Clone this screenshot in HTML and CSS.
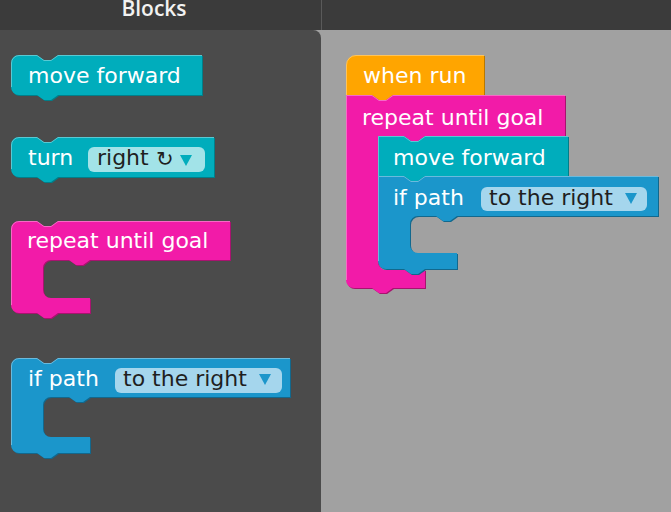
FILE: index.html
```html
<!DOCTYPE html>
<html>
<head>
<meta charset="utf-8">
<link rel="stylesheet" href="styles.css">
</head>
<body>
<div class="app">
  <header class="topbar">
    <div class="tb-left"><span class="tb-title">Blocks</span></div>
    <div class="tb-right"></div>
  </header>
  <main class="main">
    <section class="flyout">
      <svg class="canvas" width="321" height="482" viewBox="0 30 321 482">
        <!-- move forward -->
        <g class="blk teal">
          <path class="dk" transform="translate(1,1)" d="M11,63 A8,8 0 0 1 19,55 H37 L44,60 H51 L58,55 H202 V95 H58 L51,100 H44 L37,95 H19 A8,8 0 0 1 11,87 Z"/>
          <path class="bd" d="M11,63 A8,8 0 0 1 19,55 H37 L44,60 H51 L58,55 H202 V95 H58 L51,100 H44 L37,95 H19 A8,8 0 0 1 11,87 Z"/>
          <path class="hl" d="M11.5,87 V63 A7.5,7.5 0 0 1 19,55.5 H37 L44,60.5 H51 L58,55.5 H202"/>
          <text class="lbl" x="28" y="83">move forward</text>
        </g>
        <!-- turn -->
        <g class="blk teal">
          <path class="dk" transform="translate(1,1)" d="M11,145 A8,8 0 0 1 19,137 H37 L44,142 H51 L58,137 H214 V177 H58 L51,182 H44 L37,177 H19 A8,8 0 0 1 11,169 Z"/>
          <path class="bd" d="M11,145 A8,8 0 0 1 19,137 H37 L44,142 H51 L58,137 H214 V177 H58 L51,182 H44 L37,177 H19 A8,8 0 0 1 11,169 Z"/>
          <path class="hl" d="M11.5,169 V145 A7.5,7.5 0 0 1 19,137.5 H37 L44,142.5 H51 L58,137.5 H214"/>
          <text class="lbl" x="28" y="165">turn</text>
          <rect class="dd" x="88" y="147" width="117" height="25" rx="6"/>
          <text class="ddt" x="97" y="165">right</text>
          <text class="ddt sym" x="156" y="166">↻</text>
          <polygon class="arr" points="180,155 192,155 186,166"/>
        </g>
        <!-- repeat -->
        <g class="blk pink">
          <path class="dk" transform="translate(1,1)" d="M11,229 A8,8 0 0 1 19,221 H37 L44,226 H51 L58,221 H230 V260 H90 L83,265 H76 L69,260 H51 A8,8 0 0 0 43,268 V290 A8,8 0 0 0 51,298 H90 V313 H58 L51,318 H44 L37,313 H19 A8,8 0 0 1 11,305 Z"/>
          <path class="bd" d="M11,229 A8,8 0 0 1 19,221 H37 L44,226 H51 L58,221 H230 V260 H90 L83,265 H76 L69,260 H51 A8,8 0 0 0 43,268 V290 A8,8 0 0 0 51,298 H90 V313 H58 L51,318 H44 L37,313 H19 A8,8 0 0 1 11,305 Z"/>
          <path class="hl" d="M11.5,305 V229 A7.5,7.5 0 0 1 19,221.5 H37 L44,226.5 H51 L58,221.5 H230"/>
          <text class="lbl" x="27" y="248">repeat until goal</text>
        </g>
        <!-- if path -->
        <g class="blk blue">
          <path class="dk" transform="translate(1,1)" d="M11,366 A8,8 0 0 1 19,358 H37 L44,363 H51 L58,358 H290 V397 H90 L83,402 H76 L69,397 H51 A8,8 0 0 0 43,405 V429 A8,8 0 0 0 51,437 H90 V453 H58 L51,458 H44 L37,453 H19 A8,8 0 0 1 11,445 Z"/>
          <path class="bd" d="M11,366 A8,8 0 0 1 19,358 H37 L44,363 H51 L58,358 H290 V397 H90 L83,402 H76 L69,397 H51 A8,8 0 0 0 43,405 V429 A8,8 0 0 0 51,437 H90 V453 H58 L51,458 H44 L37,453 H19 A8,8 0 0 1 11,445 Z"/>
          <path class="hl" d="M11.5,445 V366 A7.5,7.5 0 0 1 19,358.5 H37 L44,363.5 H51 L58,358.5 H290"/>
          <text class="lbl" x="28" y="386">if path</text>
          <rect class="dd" x="115" y="368" width="167" height="25" rx="6"/>
          <text class="ddt" x="123" y="386">to the right</text>
          <polygon class="arr" points="259,374 271,374 265,385"/>
        </g>
      </svg>
    </section>
    <section class="workspace">
      <svg class="canvas" width="350" height="482" viewBox="321 30 350 482">
        <!-- when run -->
        <g class="blk orange">
          <path class="dk" transform="translate(1,1)" d="M346,65 A10,10 0 0 1 356,55 H484 V95 H393 L386,100 H379 L372,95 H346 Z"/>
          <path class="bd" d="M346,65 A10,10 0 0 1 356,55 H484 V95 H393 L386,100 H379 L372,95 H346 Z"/>
          <path class="hl" d="M346.5,95 V65 A9.5,9.5 0 0 1 356,55.5 H484"/>
          <text class="lbl" x="363" y="83">when run</text>
        </g>
        <!-- repeat -->
        <g class="blk pink">
          <path class="dk" transform="translate(1,1)" d="M346,95 H372 L379,100 H386 L393,95 H565 V136 H425 L418,141 H411 L404,136 H386 A8,8 0 0 0 378,144 V262 A8,8 0 0 0 386,270 H425 V288 H393 L386,293 H379 L372,288 H354 A8,8 0 0 1 346,280 Z"/>
          <path class="bd" d="M346,95 H372 L379,100 H386 L393,95 H565 V136 H425 L418,141 H411 L404,136 H386 A8,8 0 0 0 378,144 V262 A8,8 0 0 0 386,270 H425 V288 H393 L386,293 H379 L372,288 H354 A8,8 0 0 1 346,280 Z"/>
          <path class="hl" d="M346.5,280 V95.5 H372 L379,100.5 H386 L393,95.5 H565"/>
          <text class="lbl" x="362" y="125">repeat until goal</text>
        </g>
        <!-- move forward -->
        <g class="blk teal">
          <path class="dk" transform="translate(1,1)" d="M378,136 H404 L411,141 H418 L425,136 H568 V176 H425 L418,181 H411 L404,176 H378 Z"/>
          <path class="bd" d="M378,136 H404 L411,141 H418 L425,136 H568 V176 H425 L418,181 H411 L404,176 H378 Z"/>
          <path class="hl" d="M378.5,176 V136.5 H404 L411,141.5 H418 L425,136.5 H568"/>
          <text class="lbl" x="393" y="165">move forward</text>
        </g>
        <!-- if path -->
        <g class="blk blue">
          <path class="dk" transform="translate(1,1)" d="M378,176 H404 L411,181 H418 L425,176 H658 V216 H457 L450,221 H443 L436,216 H418 A8,8 0 0 0 410,224 V245 A8,8 0 0 0 418,253 H457 V269 H425 L418,274 H411 L404,269 H386 A8,8 0 0 1 378,261 Z"/>
          <path class="bd" d="M378,176 H404 L411,181 H418 L425,176 H658 V216 H457 L450,221 H443 L436,216 H418 A8,8 0 0 0 410,224 V245 A8,8 0 0 0 418,253 H457 V269 H425 L418,274 H411 L404,269 H386 A8,8 0 0 1 378,261 Z"/>
          <path class="hl" d="M378.5,261 V176.5 H404 L411,181.5 H418 L425,176.5 H658"/>
          <text class="lbl" x="393" y="205">if path</text>
          <rect class="dd" x="481" y="187" width="166" height="24" rx="6"/>
          <text class="ddt" x="489" y="205">to the right</text>
          <polygon class="arr" points="625,193 637,193 631,204"/>
        </g>
      </svg>
    </section>
  </main>
</div>
</body>
</html>
```
FILE: styles.css
```css
* { box-sizing: border-box; }
html, body { margin: 0; padding: 0; }
body { background: #a1a1a1; font-family: "Open Sans", "Noto Sans", sans-serif; }
.app { width: 671px; height: 512px; display: flex; flex-direction: column; overflow: hidden; }
.topbar { height: 30px; display: flex; background: #3b3b3b; flex: none; }
.tb-left { width: 322px; border-right: 1px solid #5a5a5a; text-align: center; padding-right: 13px; overflow: hidden; }
.tb-title { display: block; color: #f2f2f2; font-size: 21px; font-weight: 600; line-height: 16px; }
.tb-right { flex: 1; }
.main { flex: 1; display: flex; background: #a1a1a1; }
.flyout { width: 321px; background: #4b4b4b; border-top-right-radius: 8px; overflow: hidden; }
.workspace { flex: 1; }
.canvas { display: block; }
.lbl { fill: #ffffff; font-family: "DejaVu Sans", sans-serif; font-size: 22px; }
.ddt { fill: #1f1f1f; font-family: "DejaVu Sans", sans-serif; font-size: 22px; }
.sym { font-size: 21px; }
.hl { fill: none; stroke: rgba(255, 255, 255, 0.35); stroke-width: 1; }
.teal .bd { fill: #00adbc; }
.teal .dk { fill: #007f8a; }
.teal .dd { fill: #a2e3e8; }
.teal .arr { fill: #00adbc; }
.pink .bd { fill: #f21ba8; }
.pink .dk { fill: #a8136f; }
.orange .bd { fill: #ffa500; }
.orange .dk { fill: #b87800; }
.blue .bd { fill: #1b96cb; }
.blue .dk { fill: #12688d; }
.blue .dd { fill: #a5d6ed; }
.blue .arr { fill: #1b96cb; }
```
